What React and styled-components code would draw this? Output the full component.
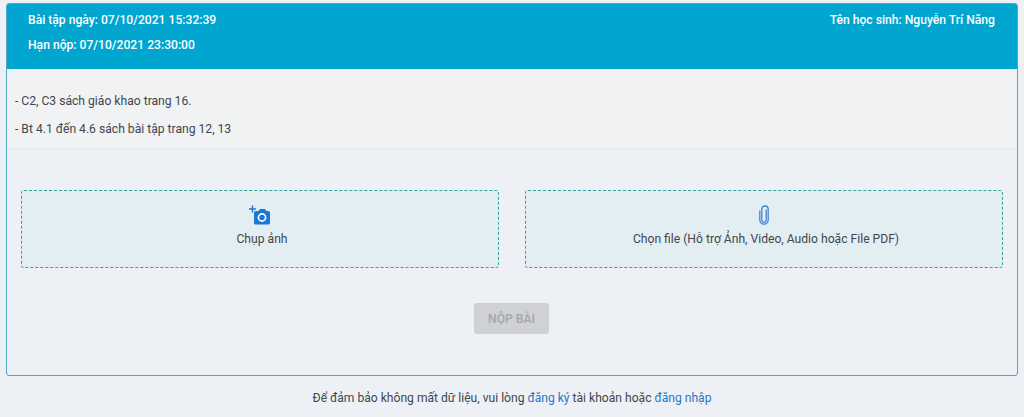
import styled, { createGlobalStyle } from "styled-components";

const GlobalStyle = createGlobalStyle`
  html, body {
    margin: 0;
    padding: 0;
    background: #edf1f5;
    font-family: Roboto, "Noto Sans", sans-serif;
    color: #41464c;
  }
  * { box-sizing: border-box; }
`;

const Page = styled.div`
  width: 1024px;
  height: 417px;
  padding: 3px 6px 0;
  overflow: hidden;
`;

const Card = styled.div`
  height: 373px;
  border: 1px solid #4fa9c4;
  border-radius: 3px;
  display: flex;
  flex-direction: column;
  overflow: hidden;
`;

const Header = styled.div`
  height: 66px;
  flex: none;
  background: #00a5d0;
  color: #fff;
  font-size: 12.13px;
  font-weight: 500;
  padding: 10px 23px 0 22px;
  display: flex;
  justify-content: space-between;
  margin: -1px -1px 0;
`;

const HeaderLine = styled.div`
  line-height: 14px;
  height: 14px;
  margin-bottom: 11px;
`;

const Assignment = styled.div`
  height: 80px;
  flex: none;
  background: #f1f2f4;
  border-bottom: 1px solid #e8eaee;
  padding: 25px 8px 0;
  font-size: 12.13px;
`;

const AssignmentLine = styled.div`
  line-height: 14px;
  height: 14px;
  margin-bottom: 14px;
`;

const UploadRow = styled.div`
  display: flex;
  gap: 26px;
  padding: 41px 14px 0;
`;

const UploadBox = styled.div`
  flex: 1;
  height: 78px;
  background: #e3eef3;
  border: 1px dashed #2fa7a0;
  border-radius: 3px;
  display: flex;
  flex-direction: column;
  align-items: center;
  padding-top: 14px;
  font-size: 12.13px;
`;

const IconSlot = styled.div`
  height: 20px;
  margin-bottom: 7px;
  display: flex;
  align-items: center;
  justify-content: center;
`;

const BoxLabel = styled.div`
  padding-left: 4px;
  line-height: 14px;
`;

const SubmitRow = styled.div`
  display: flex;
  justify-content: center;
  padding: 35px 1px 0 0;
`;

const SubmitButton = styled.button`
  width: 75px;
  height: 31px;
  border: none;
  border-radius: 3px;
  background: #cfd1d4;
  color: #a4a7ab;
  font-family: inherit;
  font-size: 12.13px;
  font-weight: 500;
  padding: 0;
`;

const Footer = styled.div`
  text-align: center;
  font-size: 12.1px;
  line-height: 14px;
  padding-top: 15px;
`;

const FooterLink = styled.a`
  color: #2a76c6;
`;

function CameraPlusIcon() {
  return (
    <svg width="22" height="20" viewBox="0 0 22 20">
      <path d="M3.500 0.500v7M0 4h7" stroke="#1a78d8" strokeWidth="1.500" />
      <path
        d="M5 8a2 2 0 0 1 2-2h2.500L11 4h5l1.500 2h2A1.500 1.500 0 0 1 21 7.500V18a1.500 1.500 0 0 1-1.500 1.500h-13A1.500 1.500 0 0 1 5 18z"
        fill="#1a78d8"
      />
      <circle cx="13" cy="12.500" r="3.600" fill="none" stroke="#fff" strokeWidth="1.600" />
    </svg>
  );
}

function PaperclipIcon() {
  return (
    <svg width="14" height="20" viewBox="0 0 14 20" fill="none">
      <path
        d="M9.200 5v10a2.200 2.200 0 0 1-4.400 0V4.200a3.200 3.200 0 0 1 6.400 0V15a4.200 4.200 0 0 1-8.400 0V6"
        stroke="#3f86d2"
        strokeWidth="1.300"
        strokeLinecap="round"
      />
    </svg>
  );
}

export default function App() {
  return (
    <>
      <GlobalStyle />
      <Page>
        <Card>
          <Header>
            <div>
              <HeaderLine>Bài tập ngày: 07/10/2021 15:32:39</HeaderLine>
              <HeaderLine>Hạn nộp: 07/10/2021 23:30:00</HeaderLine>
            </div>
            <HeaderLine>Tên học sinh: Nguyễn Trí Năng</HeaderLine>
          </Header>
          <Assignment>
            <AssignmentLine>- C2, C3 sách giáo khao trang 16.</AssignmentLine>
            <AssignmentLine>- Bt 4.1 đến 4.6 sách bài tập trang 12, 13</AssignmentLine>
          </Assignment>
          <UploadRow>
            <UploadBox>
              <IconSlot><CameraPlusIcon /></IconSlot>
              <BoxLabel>Chụp ảnh</BoxLabel>
            </UploadBox>
            <UploadBox>
              <IconSlot><PaperclipIcon /></IconSlot>
              <BoxLabel>Chọn file (Hỗ trợ Ảnh, Video, Audio hoặc File PDF)</BoxLabel>
            </UploadBox>
          </UploadRow>
          <SubmitRow>
            <SubmitButton disabled>NỘP BÀI</SubmitButton>
          </SubmitRow>
        </Card>
        <Footer>
          Để đảm bảo không mất dữ liệu, vui lòng <FooterLink>đăng ký</FooterLink> tài khoản hoặc{" "}
          <FooterLink>đăng nhập</FooterLink>
        </Footer>
      </Page>
    </>
  );
}
